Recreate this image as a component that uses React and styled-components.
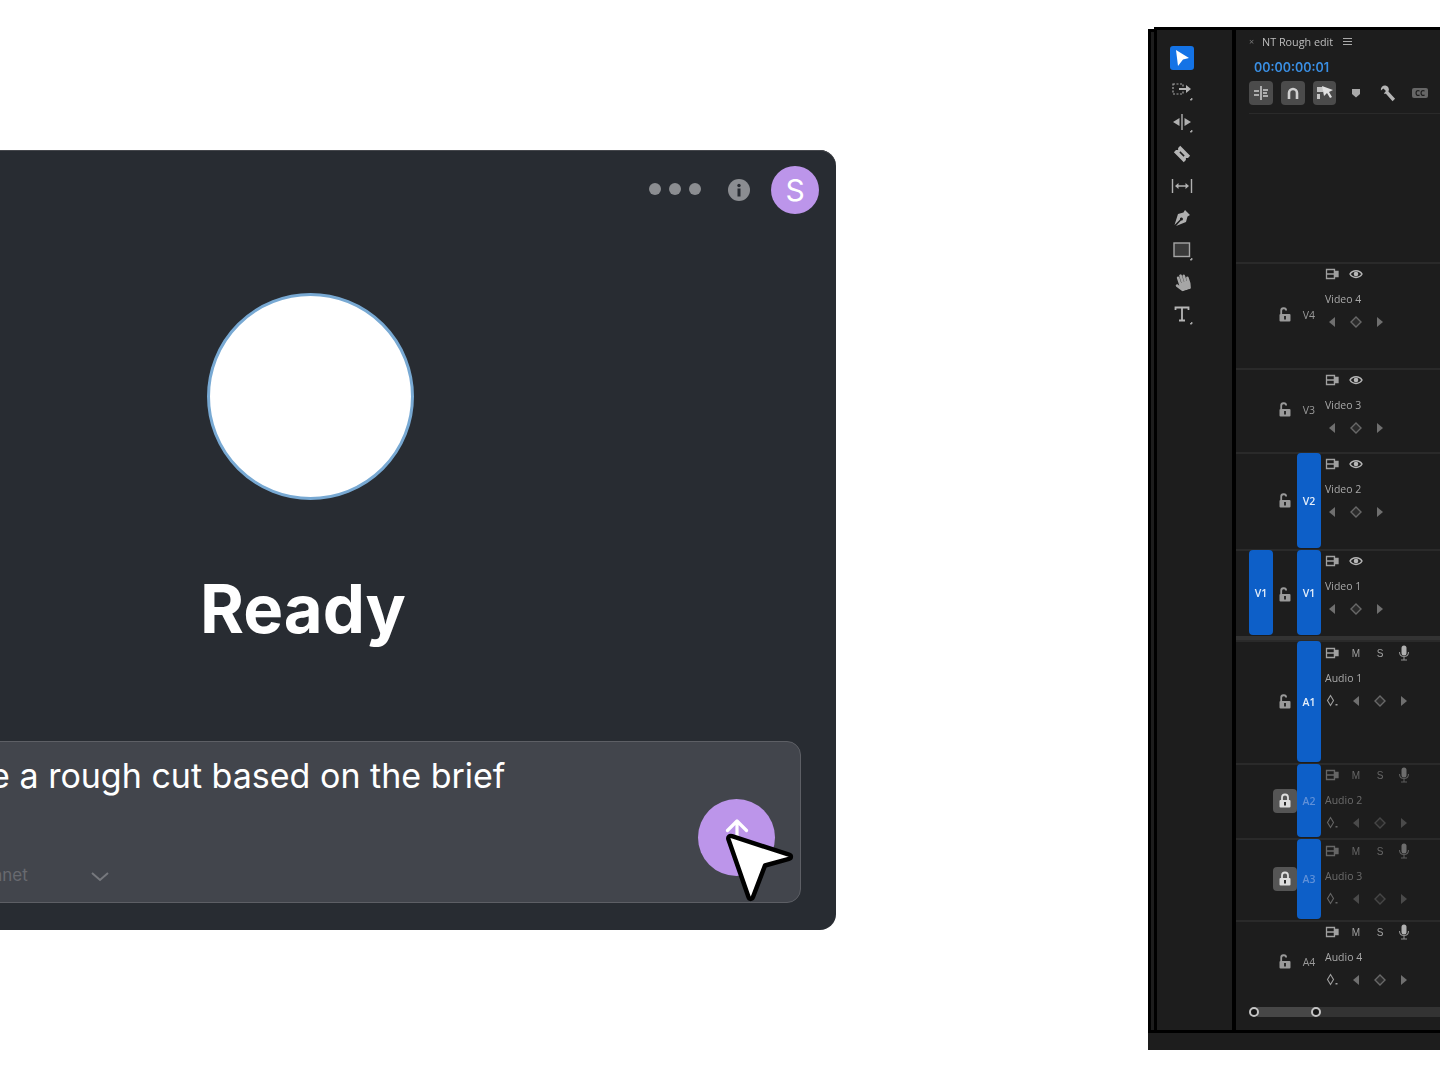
import React from 'react';
import styled, { createGlobalStyle } from 'styled-components';
import { FaHandPaper } from 'react-icons/fa';

const GlobalStyle = createGlobalStyle`
  html, body { margin: 0; background: #fff; }
  * { box-sizing: border-box; }
`;

const Page = styled.div`
  width: 1440px;
  height: 1080px;
  overflow: hidden;
  display: flex;
  justify-content: space-between;
  align-items: flex-start;
  font-family: Inter, "Liberation Sans", sans-serif;
`;

/* chat card, runs off the left side of the page */
const Card = styled.section`
  position: relative;
  flex: none;
  width: 1052px;
  height: 780px;
  margin: 150px 0 0 -216px;
  padding: 16px 35px 27px;
  display: flex;
  flex-direction: column;
  align-items: center;
  background: #282c32;
  border-radius: 16px;
  box-shadow: inset 0 1px 0 #45474c;
`;

const TopBar = styled.div`
  align-self: stretch;
  display: flex;
  justify-content: flex-end;
  align-items: center;
  margin-right: -18px;
`;

const Dots = styled.div`
  display: flex;
  gap: 8px;
  margin: 0 27px 2px 0;
`;

const Dot = styled.span`
  width: 12px;
  height: 12px;
  border-radius: 50%;
  background: #8b8d91;
`;

const InfoButton = styled.span`
  width: 22px;
  height: 22px;
  margin-right: 21px;
  display: flex;
`;

const Avatar = styled.div`
  width: 48px;
  height: 48px;
  border-radius: 50%;
  background: #bc95ea;
  color: #fff;
  font-size: 30px;
  display: flex;
  align-items: center;
  justify-content: center;
`;

const Orb = styled.div`
  width: 207px;
  height: 207px;
  margin-top: 79px;
  border-radius: 50%;
  background: #fff;
  border: 3px solid #78a9d3;
`;

const Status = styled.h1`
  margin: 68px 14px 0 0;
  color: #fff;
  font-size: 67px;
  line-height: 82px;
  font-weight: 700;
`;

const Composer = styled.div`
  align-self: stretch;
  margin-top: auto;
  height: 162px;
  padding: 11px 25px 17px 83px;
  display: flex;
  flex-direction: column;
  justify-content: space-between;
  background: #42454c;
  border: 1px solid #5d5f65;
  border-radius: 14px;
`;

const Prompt = styled.div`
  color: #fff;
  font-size: 34px;
  line-height: 46px;
`;

const ComposerFooter = styled.div`
  display: flex;
  justify-content: space-between;
  align-items: flex-end;
`;

const ModelSelect = styled.div`
  display: flex;
  align-items: center;
  gap: 62px;
  margin-left: -23px;
  color: #686a70;
  font-size: 17px;
  line-height: 24px;
`;

const Chevron = styled.svg`
  margin-top: 3px;
`;

const SendButton = styled.button`
  width: 77px;
  height: 77px;
  margin-bottom: 11px;
  padding: 0;
  border: 0;
  border-radius: 50%;
  background: #bc95ea;
  display: flex;
  align-items: center;
  justify-content: center;
`;

const Pointer = styled.svg`
  position: absolute;
  left: 940px;
  top: 682px;
`;

/* premiere timeline panel */
const Shell = styled.aside`
  flex: none;
  width: 292px;
  height: 1023px;
  margin-top: 27px;
  display: flex;
  flex-direction: column;
  font-family: "Open Sans", "Liberation Sans", sans-serif;
  filter: blur(0.5px);
`;

const Workspace = styled.div`
  flex: 1;
  min-height: 0;
  display: flex;
  border-bottom: 3px solid #000;
`;

const Gutter = styled.div`
  width: 6px;
  margin-top: 2px;
  background: #1d1d1d;
  border-top: 3px solid #000;
  border-left: 3px solid #000;
`;

const ToolPanel = styled.div`
  width: 82px;
  padding: 12px 0 0 13px;
  background: #1d1d1d;
  border-left: 3px solid #000;
  border-right: 4px solid #000;
  border-top: 3px solid #000;
  display: flex;
  flex-direction: column;
`;

const Tool = styled.div`
  width: 24px;
  height: 32px;
  display: flex;
  align-items: center;
  justify-content: center;
  color: #a6a6a6;
`;

const ToolActive = styled.div`
  width: 24px;
  height: 24px;
  margin: 4px 0;
  border-radius: 3px;
  background: #1473e6;
  display: flex;
  align-items: center;
  justify-content: center;
`;

const Timeline = styled.div`
  flex: 1;
  min-width: 0;
  background: #1d1d1d;
  border-top: 3px solid #000;
  display: flex;
  flex-direction: column;
`;

const TimelineHead = styled.div`
  height: 232px;
  flex: none;
  padding: 0 0 0 13px;
`;

const TabRow = styled.div`
  height: 23px;
  display: flex;
  align-items: center;
  color: #bdbdbd;
  font-size: 10.8px;
`;

const TabClose = styled.span`
  width: 13px;
  color: #777;
  font-size: 9px;
`;

const TabMenu = styled.span`
  width: 9px;
  height: 7px;
  margin-left: 10px;
  border-top: 1px solid #aaa;
  border-bottom: 1px solid #aaa;
  background: linear-gradient(#aaa, #aaa) center / 100% 1px no-repeat;
`;

const Timecode = styled.div`
  margin: 5px 0 0 5px;
  color: #3a8fe4;
  font-family: Inter, "Liberation Sans", sans-serif;
  font-size: 12.5px;
  font-weight: 600;
  line-height: 20px;
`;

const Toolbar = styled.div`
  display: flex;
  margin-top: 3px;
  padding-bottom: 8px;
  border-bottom: 1px solid #2a2a2a;
`;

const ToolbarButton = styled.div`
  width: 24px;
  height: 24px;
  margin-right: 8px;
  border-radius: 4px;
  background: ${(p) => (p.$on ? '#4b4b4b' : 'transparent')};
  display: flex;
  align-items: center;
  justify-content: center;
  color: #b0b0b0;
`;

const CCBadge = styled.span`
  width: 16px;
  height: 10px;
  border-radius: 2px;
  background: #666;
  color: #1d1d1d;
  font-size: 8px;
  font-weight: 700;
  line-height: 10px;
  text-align: center;
`;

const Track = styled.div`
  flex: none;
  height: ${(p) => p.$height}px;
  display: grid;
  grid-template-columns: 24px 24px 24px 1fr;
  padding-left: 13px;
  box-shadow: inset 0 2px 0 #2a2a2a${(p) => (p.$thick ? ', inset 0 -4px 0 #333' : '')};
`;

const Patch = styled.div`
  margin: 1px 0 ${(p) => (p.$thick ? 5 : 1)}px;
  border-radius: 4px;
  background: ${(p) => (p.$on ? '#0d5fc8' : 'transparent')};
  color: ${(p) => (p.$on ? (p.$dim ? '#5f90d8' : '#e6effa') : '#9a9a9a')};
  font-size: 10.5px;
  font-weight: ${(p) => (p.$on ? 600 : 400)};
  display: flex;
  align-items: center;
  justify-content: center;
`;

const LockCell = styled.div`
  display: flex;
  align-items: center;
  justify-content: center;
`;

const LockBox = styled.div`
  width: 24px;
  height: 24px;
  border-radius: 4px;
  background: ${(p) => (p.$locked ? '#555' : 'transparent')};
  display: flex;
  align-items: center;
  justify-content: center;
`;

const TrackHeader = styled.div`
  margin-left: -1px;
  padding-top: ${(p) => 4 + (p.$nudge || 0)}px;
  opacity: ${(p) => (p.$dim ? 0.55 : 1)};
`;

const IconRow = styled.div`
  height: 16px;
  display: flex;
`;

const IconCell = styled.div`
  width: 24px;
  height: 16px;
  display: flex;
  align-items: center;
  justify-content: center;
  color: #a0a0a0;
  font-size: 10px;
  font-family: "Liberation Sans", sans-serif;
`;

const TrackName = styled.div`
  height: 16px;
  margin: 9px 0 7px;
  padding-left: 5px;
  color: #a8a8a8;
  font-size: 10.5px;
  font-weight: 500;
  line-height: 16px;
`;

const Scroller = styled.div`
  position: relative;
  height: 10px;
  margin: 3px 0 0 18px;
  background: #333;
  border-radius: 5px 0 0 5px;
`;

const ScrollRange = styled.div`
  width: 62px;
  height: 10px;
  background: #474747;
  border-radius: 5px 0 0 5px;
  display: flex;
  justify-content: space-between;
`;

const ScrollHandle = styled.span`
  width: 10px;
  height: 10px;
  margin: 0 -5px;
  border-radius: 50%;
  background: #161616;
  border: 2px solid #c4c4c4;
`;

const BottomStrip = styled.div`
  height: 17px;
  flex: none;
  background: #1d1d1d;
`;

const Sync = () => (
  <svg width="14" height="12" viewBox="0 0 14 12" fill="none" stroke="#a0a0a0" strokeWidth="1.300">
    <path d="M1.500 1.500h8v9h-8zM1.500 6h8" />
    <path d="M9.500 3.500h3.500v5H9.500z" fill="#a0a0a0" />
  </svg>
);

const Eye = () => (
  <svg width="14" height="10" viewBox="0 0 14 10">
    <path d="M1 5c2.500-4.500 9.500-4.500 12 0-2.500 4.500-9.500 4.500-12 0z" fill="none" stroke="#b5b5b5" strokeWidth="1.500" />
    <circle cx="7" cy="5" r="2.300" fill="#b5b5b5" />
  </svg>
);

const Mic = () => (
  <svg width="12" height="16" viewBox="0 0 12 16">
    <rect x="3.500" y="0.500" width="5" height="10" rx="2.500" fill="#b0b0b0" />
    <path d="M1.500 7c0 6 9 6 9 0M6 12v2.500M3 15h6" fill="none" stroke="#909090" strokeWidth="1.100" />
  </svg>
);

const Back = () => (
  <svg width="8" height="12" viewBox="0 0 8 12"><path d="M7 1v10L1 6z" fill="#6f6f6f" /></svg>
);

const Forward = () => (
  <svg width="8" height="12" viewBox="0 0 8 12"><path d="M1 1v10l6-5z" fill="#6f6f6f" /></svg>
);

const Keyframe = () => (
  <svg width="12" height="12" viewBox="0 0 12 12"><path d="M6 1l5 5-5 5-5-5z" fill="#2b2b2b" stroke="#686868" strokeWidth="1.400" /></svg>
);

const Pan = () => (
  <svg width="12" height="14" viewBox="0 0 12 14">
    <path d="M4.500 1.500l3 5-3 5-3-5z" fill="none" stroke="#a0a0a0" strokeWidth="1.100" />
    <rect x="9.500" y="10" width="2" height="1.500" fill="#a0a0a0" />
  </svg>
);

const Lock = ({ closed }) => (
  <svg width="14" height="16" viewBox="0 0 14 16">
    {closed
      ? <path d="M4 7V4.500a3 3 0 0 1 6 0V7" fill="none" stroke="#ddd" strokeWidth="1.800" />
      : <path d="M3.200 7V4a2.500 2.500 0 0 1 5-.5" fill="none" stroke="#9a9a9a" strokeWidth="1.800" />}
    <rect x="1.500" y="7" width="11" height="7.500" rx="1" fill={closed ? '#ddd' : '#9a9a9a'} />
    <rect x="6" y="9" width="2" height="3.500" fill="#2a2a2a" />
  </svg>
);

const Tick = () => <path d="M20 22h2v-2z" fill="#a6a6a6" stroke="#a6a6a6" strokeWidth="0.800" />;

const toolIcons = [
  <svg key="track" width="24" height="24" viewBox="0 0 24 24" fill="none">
    <rect x="3" y="6" width="10" height="10" stroke="#a6a6a6" strokeWidth="1.200" strokeDasharray="2 1.500" />
    <path d="M9 10h7V7l5 4-5 4v-3H9z" fill="#b5b5b5" /><Tick />
  </svg>,
  <svg key="ripple" width="24" height="24" viewBox="0 0 24 24">
    <path d="M11.300 4h1.400v16h-1.400zM9.500 8v8L3 12zM14.500 8v8l6.500-4z" fill="#b0b0b0" /><Tick />
  </svg>,
  <svg key="razor" width="24" height="24" viewBox="0 0 24 24">
    <g transform="rotate(45 12 12)">
      <path d="M5 7.500h14v3l-1.500 1.500 1.500 1.500v3H5v-3L6.500 12 5 10.500z" fill="#b5b5b5" />
      <path d="M9 12h6" stroke="#1d1d1d" strokeWidth="1.500" />
    </g>
  </svg>,
  <svg key="slip" width="24" height="24" viewBox="0 0 24 24" fill="none" stroke="#b0b0b0" strokeWidth="1.400">
    <path d="M2.500 5v14M21.500 5v14M6 12h12" />
    <path d="M5 12l3.500-3v6zM19 12l-3.500-3v6z" fill="#b0b0b0" stroke="none" />
  </svg>,
  <svg key="pen" width="24" height="24" viewBox="0 0 24 24">
    <path d="M15 4l5 5-2.500 1.500L16 16l-10 4 5-5.500a1.500 1.500 0 1 0-1-1L4.500 19 8 8l5.500-1.500z" fill="#b0b0b0" />
  </svg>,
  <svg key="rect" width="24" height="24" viewBox="0 0 24 24">
    <rect x="4" y="5" width="15.500" height="13.500" fill="#3a3a3a" stroke="#a6a6a6" strokeWidth="1.400" /><Tick />
  </svg>,
  <FaHandPaper key="hand" size={17} style={{ transform: 'rotate(-18deg)' }} />,
  <svg key="type" width="24" height="24" viewBox="0 0 24 24" fill="none" stroke="#b5b5b5" strokeWidth="1.800">
    <path d="M5.500 8V5.500h13V8M12 5.500V18.500M9 18.500h6" /><Tick />
  </svg>,
];

const tracks = [
  { id: 'V4', name: 'Video 4', height: 106 },
  { id: 'V3', name: 'Video 3', height: 84 },
  { id: 'V2', name: 'Video 2', height: 97, target: true },
  { id: 'V1', name: 'Video 1', height: 91, target: true, source: true, thick: true },
  { id: 'A1', name: 'Audio 1', height: 123, target: true, audio: true, nudge: 1 },
  { id: 'A2', name: 'Audio 2', height: 75, target: true, audio: true, locked: true },
  { id: 'A3', name: 'Audio 3', height: 82, target: true, audio: true, locked: true, nudge: 1 },
  { id: 'A4', name: 'Audio 4', height: 84, audio: true },
];

const TrackRow = ({ track }) => (
  <Track $height={track.height} $thick={track.thick}>
    <Patch $on={track.source} $thick={track.thick}>{track.source ? track.id : ''}</Patch>
    <LockCell>
      <LockBox $locked={track.locked}><Lock closed={track.locked} /></LockBox>
    </LockCell>
    <Patch $on={track.target} $dim={track.locked} $thick={track.thick}>{track.id}</Patch>
    <TrackHeader $dim={track.locked} $nudge={track.nudge}>
      <IconRow>
        <IconCell><Sync /></IconCell>
        {track.audio ? (
          <>
            <IconCell>M</IconCell>
            <IconCell>S</IconCell>
            <IconCell><Mic /></IconCell>
          </>
        ) : (
          <IconCell><Eye /></IconCell>
        )}
      </IconRow>
      <TrackName>{track.name}</TrackName>
      <IconRow>
        {track.audio && <IconCell><Pan /></IconCell>}
        <IconCell><Back /></IconCell>
        <IconCell><Keyframe /></IconCell>
        <IconCell><Forward /></IconCell>
      </IconRow>
    </TrackHeader>
  </Track>
);

const App = () => (
  <Page>
    <GlobalStyle />
    <Card>
      <TopBar>
        <Dots><Dot /><Dot /><Dot /></Dots>
        <InfoButton>
          <svg width="22" height="22" viewBox="0 0 22 22">
            <circle cx="11" cy="11" r="11" fill="#8b8d91" />
            <rect x="9.500" y="9.500" width="3" height="8" fill="#282c32" />
            <circle cx="11" cy="6.500" r="1.700" fill="#282c32" />
          </svg>
        </InfoButton>
        <Avatar>S</Avatar>
      </TopBar>
      <Orb />
      <Status>Ready</Status>
      <Composer>
        <Prompt>Create a rough cut based on the brief</Prompt>
        <ComposerFooter>
          <ModelSelect>
            Claude 3.5 Sonnet
            <Chevron width="20" height="12" viewBox="0 0 20 12" fill="none" stroke="#76787d" strokeWidth="2">
              <path d="M2 2l8 7 8-7" />
            </Chevron>
          </ModelSelect>
          <SendButton>
            <svg width="38" height="38" viewBox="0 0 38 38" fill="none" stroke="#fff" strokeWidth="3.200" strokeLinecap="round" strokeLinejoin="round">
              <path d="M19 36V2M9.500 11.500 19 2l9.500 9.500" />
            </svg>
          </SendButton>
        </ComposerFooter>
      </Composer>
      <Pointer width="72" height="72" viewBox="0 0 72 72">
        <path d="M4.500 7.500c-.8-2.500 1-4 3.500-3.300l57 18.500c2.500.8 2.500 3.500 0 4.200L41 33.500 29 65c-1 2.500-3.800 2.500-4.500 0z" fill="#fff" stroke="#000" strokeWidth="4.500" strokeLinejoin="round" />
      </Pointer>
    </Card>
    <Shell>
      <Workspace>
        <Gutter />
        <ToolPanel>
          <ToolActive>
            <svg width="16" height="18" viewBox="0 0 16 18"><path d="M2 1l13 8-6 1.500L4 17z" fill="#fff" /></svg>
          </ToolActive>
          {toolIcons.map((icon) => <Tool key={icon.key}>{icon}</Tool>)}
        </ToolPanel>
        <Timeline>
          <TimelineHead>
            <TabRow>
              <TabClose>×</TabClose>
              NT Rough edit
              <TabMenu />
            </TabRow>
            <Timecode>00:00:00:01</Timecode>
            <Toolbar>
              <ToolbarButton $on>
                <svg width="16" height="14" viewBox="0 0 16 14" fill="none" stroke="#d0d0d0" strokeWidth="1.500">
                  <path d="M8 0v14M1 5h5M1 9h5M10 4h5M10 7h4M10 10h5" />
                </svg>
              </ToolbarButton>
              <ToolbarButton $on>
                <svg width="14" height="14" viewBox="0 0 14 14" fill="none" stroke="#d0d0d0" strokeWidth="2.600">
                  <path d="M3 13V7a4 4 0 0 1 8 0v6" />
                </svg>
              </ToolbarButton>
              <ToolbarButton $on>
                <svg width="18" height="16" viewBox="0 0 18 16">
                  <path d="M1 2h6v5H1zM1 9h3v5H1z" fill="#c4c4c4" />
                  <path d="M6 1l11 4-4 2 3 5-2 1-3-5-3 3z" fill="#e0e0e0" />
                </svg>
              </ToolbarButton>
              <ToolbarButton>
                <svg width="10" height="12" viewBox="0 0 10 12"><path d="M1 2h8v5l-4 3.500L1 7z" fill="#a8a8a8" /></svg>
              </ToolbarButton>
              <ToolbarButton>
                <svg width="20" height="20" viewBox="0 0 24 24">
                  <path d="M9 3a5 5 0 0 0-5.500 6l3-2.500 3 3-2.500 3a5 5 0 0 0 2.500.3l8 9 3-3-8-8.500A5 5 0 0 0 9 3z" fill="#b5b5b5" />
                </svg>
              </ToolbarButton>
              <ToolbarButton><CCBadge>CC</CCBadge></ToolbarButton>
            </Toolbar>
          </TimelineHead>
          {tracks.map((track) => <TrackRow key={track.id} track={track} />)}
          <Scroller>
            <ScrollRange><ScrollHandle /><ScrollHandle /></ScrollRange>
          </Scroller>
        </Timeline>
      </Workspace>
      <BottomStrip />
    </Shell>
  </Page>
);

export default App;
